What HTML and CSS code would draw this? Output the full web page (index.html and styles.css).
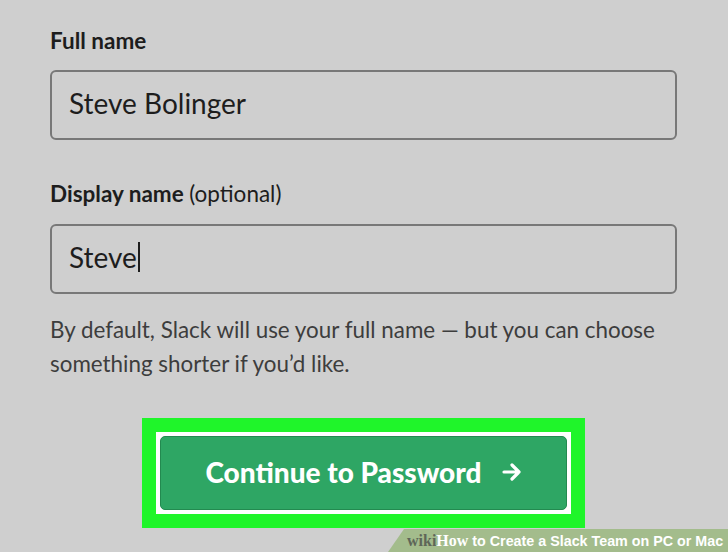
FILE: index.html
```html
<!DOCTYPE html>
<html>
<head>
    <meta charset="UTF-8">
    <title>Create a Slack Team</title>
    <link rel="stylesheet" href="styles.css">
</head>
<body>

<div class="form">
    <label class="label">Full name</label>
    <div class="field">Steve Bolinger</div>

    <label class="label second">Display name <span class="hint">(optional)</span></label>
    <div class="field">Steve<span class="caret"></span></div>

    <p class="help">By default, Slack will use your full name — but you can choose something shorter if you’d like.</p>

    <div class="highlight">
        <div class="frame">
            <div class="button">Continue to Password
                <svg class="arrow" width="20" height="18" viewBox="0 0 20 18">
                    <path d="M2 9 H17 M10 2 L17 9 L10 16" fill="none" stroke="#fff" stroke-width="3.2" stroke-linecap="round" stroke-linejoin="round"/>
                </svg>
            </div>
        </div>
    </div>
</div>

<div class="banner">
    <span class="wiki">wiki</span><span class="how">How</span> to Create a Slack Team on PC or Mac
</div>

</body>
</html>
```

FILE: styles.css
```css
body {
    margin: 0;
    background-color: #cfcfcf;
    font-family: Lato, "Open Sans", sans-serif;
    color: #1d1d1d;
    height: 552px;
    overflow: hidden;
    position: relative;
}
.form {
    display: flex;
    flex-direction: column;
    padding: 26px 51px 0 50px;
}
.label {
    font-size: 22.5px;
    font-weight: bold;
    line-height: 30px;
    margin-bottom: 14px;
}
.label.second {
    margin-top: 39px;
    margin-bottom: 15px;
}
.hint {
    font-weight: normal;
}
.field {
    height: 66px;
    box-sizing: border-box;
    height: 70px;
    padding-bottom: 4px;
    border: 2px solid #787878;
    border-radius: 6px;
    display: flex;
    align-items: center;
    padding-left: 17px;
    font-size: 28px;
    color: #1d1d1d;
}
.caret {
    display: inline-block;
    width: 2px;
    height: 30px;
    background-color: #1d1d1d;
    margin-left: 1px;
}
.help {
    margin: 19px 0 0;
    font-size: 22.4px;
    line-height: 34px;
    color: #3d3d3d;
}
.highlight {
    align-self: center;
    margin-top: 37px;
    padding: 14px;
    background-color: #1ff52a;
}
.frame {
    background-color: #fff;
    padding: 4px;
}
.button {
    width: 407px;
    height: 74px;
    box-sizing: border-box;
    padding-bottom: 3px;
    background-color: #2ea664;
    border: 1px solid #238a50;
    border-radius: 5px;
    color: #fff;
    font-size: 28px;
    font-weight: 900;
    display: flex;
    align-items: center;
    justify-content: center;
}
.arrow {
    margin-left: 20px;
}
.banner {
    position: absolute;
    right: 0;
    bottom: 0;
    width: 340px;
    height: 23px;
    background-color: #a3bc8c;
    clip-path: polygon(16px 0, 100% 0, 100% 100%, 0 100%);
    color: #fff;
    font-family: "Liberation Sans", Arial, sans-serif;
    font-weight: bold;
    font-size: 14.3px;
    line-height: 23px;
    padding-left: 19px;
    box-sizing: border-box;
    white-space: nowrap;
}
.wiki {
    font-family: "Liberation Serif", serif;
    color: #5e6658;
    font-size: 16px;
}
.how {
    font-family: "Liberation Serif", serif;
    font-size: 16px;
}
```
